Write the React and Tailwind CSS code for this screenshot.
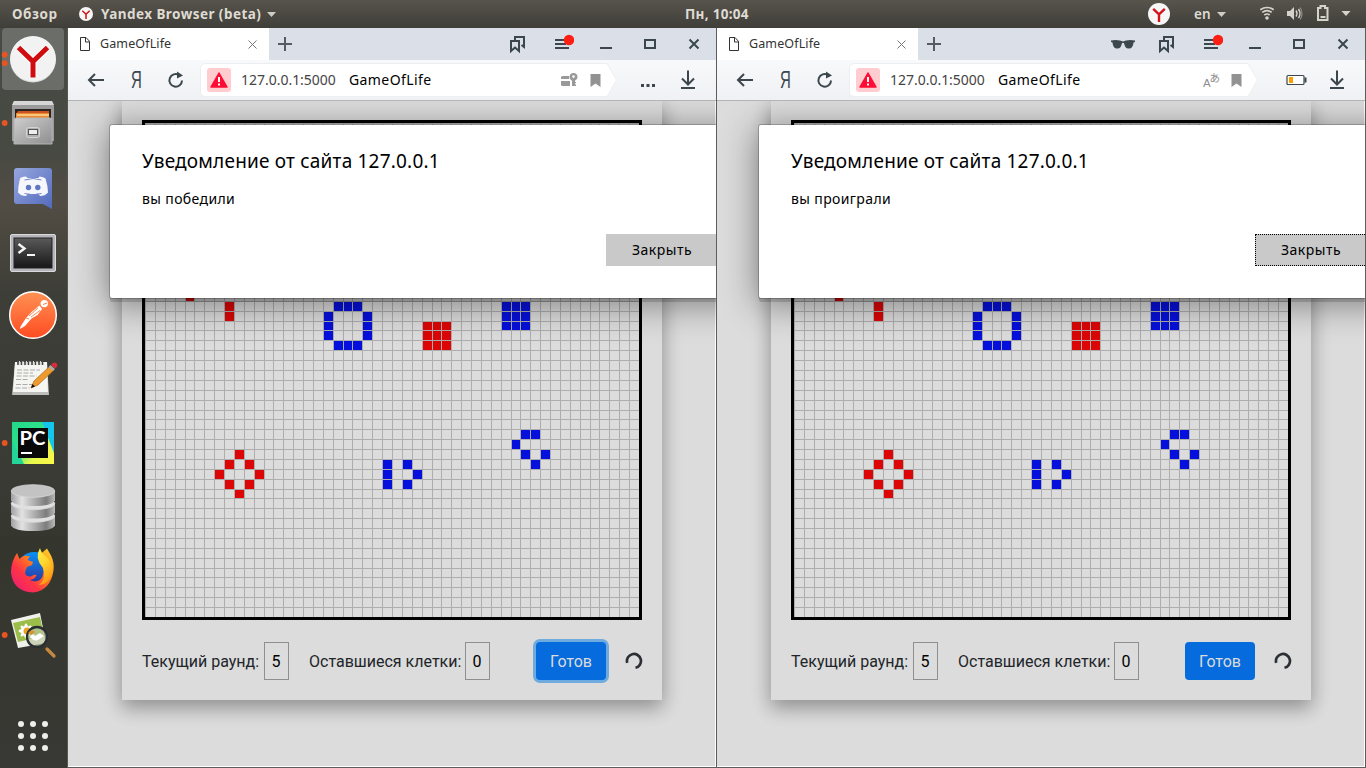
import React from 'react';

const SIZE = 494;
const COUNT = 50;
const at = (k) => Math.round((SIZE / COUNT) * k);

const RED = [
  [4, 17], [8, 18], [8, 19],
  [28, 20], [29, 20], [30, 20], [28, 21], [29, 21], [30, 21], [28, 22], [29, 22], [30, 22],
  [9, 33], [8, 34], [10, 34], [7, 35], [11, 35], [8, 36], [10, 36], [9, 37],
];
const BLUE = [
  [19, 18], [20, 18], [21, 18], [18, 19], [22, 19], [18, 20], [22, 20], [18, 21], [22, 21], [19, 22], [20, 22], [21, 22],
  [36, 18], [37, 18], [38, 18], [36, 19], [37, 19], [38, 19], [36, 20], [37, 20], [38, 20],
  [38, 31], [39, 31], [37, 32], [38, 33], [40, 33], [39, 34],
  [24, 34], [24, 35], [24, 36], [26, 34], [26, 36], [27, 35],
];

function Cells({ cells, fill }) {
  return cells.map(([c, r]) => (
    <rect key={c + '-' + r} x={at(c) + 1} y={at(r) + 1} width={at(c + 1) - at(c) - 1} height={at(r + 1) - at(r) - 1} fill={fill} />
  ));
}

function Board() {
  const lines = Array.from({ length: COUNT }, (_, k) => at(k));
  return (
    <div className="h-[500px] w-[500px] border-3 border-black">
      <svg width="494" height="494" shapeRendering="crispEdges" className="block">
        {lines.map((p) => (
          <g key={p} fill="#adadad">
            <rect x={p} y="0" width="1" height="494" />
            <rect x="0" y={p} width="494" height="1" />
          </g>
        ))}
        <Cells cells={RED} fill="#dc0606" />
        <Cells cells={BLUE} fill="#0610dc" />
      </svg>
    </div>
  );
}

function Caret({ className }) {
  return (
    <svg width="9" height="5" viewBox="0 0 9 5" className={className}>
      <path d="M0 0h9L4.500 5z" fill="#cfcdc8" />
    </svg>
  );
}

function YBadge({ size }) {
  return (
    <svg width={size} height={size} viewBox="0 0 22 22" className="shrink-0">
      <circle cx="11" cy="11" r="11" fill="#f6f6f6" />
      <path d="M5.200 5.800l5.800 5.500 5.800-5.500M11 11v8" fill="none" stroke="#d4121a" strokeWidth="2.400" />
    </svg>
  );
}

function TopBar() {
  return (
    <header className="flex h-7 shrink-0 items-center bg-gradient-to-b from-[#57544c] to-[#403e39] text-[13px] font-bold text-[#dfdbd2]">
      <div className="flex w-[480px] items-center pl-3">
        <span className="w-[67px] text-[13.500px] tracking-[0.55px]">Обзор</span>
        <YBadge size={14} />
        <span className="ml-2 w-[162px] text-[13.500px] whitespace-nowrap tracking-[0.45px]">Yandex Browser (beta)</span>
        <Caret className="ml-1" />
      </div>
      <div className="flex-1 pl-[205px] text-[13.500px] whitespace-nowrap tracking-[0.3px]">Пн, 10:04</div>
      <div className="flex w-[218px] items-center">
        <YBadge size={22} />
        <span className="ml-6 w-[18px] text-[13.500px] font-semibold">en</span>
        <Caret className="ml-[5px]" />
        <svg width="108" height="20" viewBox="1250 4 108 20" className="ml-[24px]" fill="none" stroke="#d6d3cc">
          <path d="M1260.300 9.800q6.700-4.600 13.400 0M1262.300 12.400q4.700-3.400 9.400 0M1264.300 15q2.700-2 5.400 0" strokeWidth="1.700" />
          <circle cx="1267" cy="18" r="1.800" fill="#d6d3cc" stroke="none" />
          <path d="M1287 11h3l4-4v13l-4-4h-3z" fill="#d6d3cc" stroke="none" />
          <path d="M1296 10.500q2 3 0 6M1298.500 9q3 4.500 0 9" strokeWidth="1.400" />
          <path d="M1300.300 7.500q3.200 6 0 12" strokeWidth="1.200" stroke="#8b8881" />
          <path d="M1318 8h2.500v-2h4.500v2h2.500v12h-9.500z" strokeWidth="2" />
          <path d="M1320.500 17h5" strokeWidth="2" />
          <path d="M1341.500 11h9l-4.500 5z" fill="#d6d3cc" stroke="none" />
        </svg>
      </div>
    </header>
  );
}

function DockItem({ top, running, children }) {
  return (
    <svg width="68" height="64" viewBox={'0 ' + top + ' 68 64'} className="block shrink-0">
      {running && <circle cx="4.700" cy={top + 32} r="2.900" fill="#e95420" />}
      {children}
    </svg>
  );
}

function Dock() {
  return (
    <aside className="flex w-[68px] shrink-0 flex-col border-r border-[#565650] bg-[linear-gradient(#484a44_0%,#474943_16%,#524d44_24%,#4a473e_28%,#3d3e38_36%,#3a3b35_60%,#34362e_70%,#36372f_78%,#383834_100%)]">
      <svg width="0" height="0" className="absolute">
        <defs>
          <linearGradient id="metal" x1="0" x2="1">
            <stop offset="0" stopColor="#a0a0a0" /><stop offset=".25" stopColor="#e2e2e2" /><stop offset=".5" stopColor="#b4b4b4" /><stop offset=".8" stopColor="#7c7c7c" /><stop offset="1" stopColor="#b9b9b9" />
          </linearGradient>
          <linearGradient id="drawer" x1="0" x2="1" y2="1">
            <stop offset="0" stopColor="#cecece" /><stop offset="1" stopColor="#8e8e8e" />
          </linearGradient>
          <linearGradient id="orange" x2="0" y2="1">
            <stop offset="0" stopColor="#ff9254" /><stop offset="1" stopColor="#ff4b21" />
          </linearGradient>
          <linearGradient id="term" x2="0" y2="1">
            <stop offset="0" stopColor="#5a5a5a" /><stop offset=".5" stopColor="#383838" /><stop offset="1" stopColor="#171717" />
          </linearGradient>
          <linearGradient id="discord" x2="1" y2="1">
            <stop offset="0" stopColor="#96a6de" /><stop offset="1" stopColor="#526abc" />
          </linearGradient>
          <linearGradient id="pych" x1="0" y1="0" x2="1" y2="1">
            <stop offset="0" stopColor="#21d789" /><stop offset=".4" stopColor="#2ee28c" /><stop offset=".7" stopColor="#e8f84b" /><stop offset="1" stopColor="#fcf84a" />
          </linearGradient>
          <linearGradient id="fox" x1="0" y1="1" x2="1" y2="0">
            <stop offset="0" stopColor="#e8177e" /><stop offset=".35" stopColor="#ff3546" /><stop offset=".65" stopColor="#ff8b16" /><stop offset="1" stopColor="#ffdc32" />
          </linearGradient>
          <linearGradient id="flame" x1="0" y1="0" x2=".4" y2="1">
            <stop offset="0" stopColor="#fff045" /><stop offset=".5" stopColor="#ffd52e" /><stop offset="1" stopColor="#ff9a14" />
          </linearGradient>
          <linearGradient id="globe" x2="0" y2="1">
            <stop offset="0" stopColor="#0a91f5" /><stop offset="1" stopColor="#302b96" />
          </linearGradient>
        </defs>
      </svg>
      <svg width="68" height="63" viewBox="0 28 68 63" className="block shrink-0">
        <rect x="2" y="28" width="62" height="62" rx="4" fill="#6b6d68" />
        <circle cx="4.700" cy="54.700" r="2.900" fill="#e95420" /><circle cx="4.700" cy="63.200" r="2.900" fill="#e95420" />
        <circle cx="33" cy="59.500" r="23" fill="#d5d5d5" /><circle cx="33" cy="58.800" r="22.800" fill="#f2f2f2" />
        <path d="M18.500 47.500L33 61.500l14.500-14M33 60v17.500" fill="none" stroke="#fff" strokeWidth="7" />
        <path d="M18.500 47.500L33 61.500l14.500-14M33 60v17.500" fill="none" stroke="#cf0d10" strokeWidth="5" />
      </svg>
      <DockItem top={91} running>
        <path d="M14 101h38l2 5v35H12v-35z" fill="#9b9b9b" />
        <path d="M14 101h38l2 4H12z" fill="#d6d6d6" />
        <path d="M15 109h36v11H15z" fill="#2a2421" />
        <path d="M18 111h31v8H16v-5z" fill="#c85320" /><path d="M16 113h33v5H16z" fill="#e98a32" /><path d="M17 115h32" stroke="#ffd993" strokeWidth="1.500" />
        <path d="M14 119l2-1h34l2 1v25H14z" fill="url(#drawer)" stroke="#b4b4b4" />
        <rect x="26.500" y="127.500" width="13" height="10" rx="2" fill="#b0b0b0" stroke="#d4d4d4" />
        <rect x="28.500" y="129.500" width="9" height="5" fill="#eee" stroke="#555" />
      </DockItem>
      <DockItem top={155}>
        <path d="M17 168h32q3 0 3 3v38l-9-5H17q-3 0-3-3v-30q0-3 3-3z" fill="url(#discord)" />
        <path d="M26 176.500q-5 .5-6 2-2 8-2 14 3 3.500 8 3.500l2-2.500q5 1 10 0l2 2.500q5 0 8-3.500 0-6-2.500-14-2-1.700-6-2l-1 1.500h-11z" fill="#f6f7fc" />
        <circle cx="28.500" cy="187.500" r="2.700" fill="#6078c4" /><circle cx="37.800" cy="187.500" r="2.700" fill="#6078c4" />
        <path d="M24.500 180q8.500-3 17 0M24.500 193.500q8.500 3 17 0" fill="none" stroke="#7286cd" strokeWidth="1" />
      </DockItem>
      <DockItem top={219}>
        <rect x="10.500" y="234.500" width="45" height="37" rx="1.500" fill="#b6b6ba" stroke="#d9d9dd" />
        <rect x="14" y="238" width="38" height="30" fill="url(#term)" stroke="#222" />
        <path d="M18.500 244l6 4.500-6 4.500" fill="none" stroke="#f5f5f5" strokeWidth="2.400" /><path d="M27 255h8" stroke="#f5f5f5" strokeWidth="2" />
      </DockItem>
      <DockItem top={283}>
        <circle cx="33" cy="315" r="23.300" fill="url(#orange)" stroke="#fff" strokeWidth="1.500" />
        <circle cx="44.300" cy="303.600" r="3.700" fill="#fff" /><path d="M43 304.500l4-1.500" stroke="#ff7a42" strokeWidth="1" />
        <path d="M39.500 305.500l2.500 3.500-4.500 6-6 3.500-6.500 7.500-5 3 .5-2.500 5.500-8.500 5.500-6z" fill="#fff" />
        <path d="M38 308l-9 8M40 310.500l-9 6.500M26 318l3 1" stroke="#ff7a42" strokeWidth=".9" />
      </DockItem>
      <DockItem top={347}>
        <path d="M15 363h32l2 32H12z" fill="#bdbdb9" /><path d="M15 362h32l1 30H13z" fill="#f5f5f1" />
        <path d="M18 360v5M21.500 360v5M25 360v5M28.500 360v5M32 360v5M35.500 360v5M39 360v5M42.500 360v5" stroke="#444" strokeWidth="1.600" /><path d="M19.500 361v4M23 361v4M26.500 361v4M30 361v4M33.500 361v4M37 361v4M40.500 361v4" stroke="#ddd" />
        <path d="M17 370h23M17 373h16M16.500 376h20M16 379.500h12M16 384.500h16M15.500 388h14" stroke="#aaa" strokeDasharray="5 1.500" />
        <path d="M31 388l3-7 16-15 4 4-16 15z" fill="#ed9b2d" stroke="#a96517" strokeWidth=".7" />
        <path d="M31 388l1.500-4 2.500 2.500z" fill="#111" /><path d="M48.500 367l4.500 4 2-2-4.500-4z" fill="#aaa" /><path d="M51 364.500l4 4q3-2 2-4.500t-4-1z" fill="#df2a3a" />
      </DockItem>
      <DockItem top={411} running>
        <rect x="12" y="422" width="42" height="42" fill="url(#pych)" />
        <path d="M42 422h12v31z" fill="#14c5ec" /><path d="M12 440v24h12z" fill="#23d598" />
        <rect x="18" y="428" width="30" height="30" fill="#090909" />
        <text x="19.400" y="444.800" fontFamily="Lato" fontWeight="700" fontSize="18.500" fill="#fff" textLength="26" lengthAdjust="spacingAndGlyphs">PC</text>
        <path d="M21 453h11" stroke="#fff" strokeWidth="2" />
      </DockItem>
      <DockItem top={475}>
        {[516, 503.500, 491].map((y, i) => (
          <g key={y}>
            <path d={'M11 ' + y + 'v9.500q3 5.500 22 5.500t22-5.500v-9.500z'} fill="url(#metal)" />
            <ellipse cx="33" cy={y} rx="21.700" ry="6.300" fill={i === 2 ? '#c3c3c3' : '#e0e0e0'} stroke="#d8d8d8" strokeWidth=".8" />
          </g>
        ))}
      </DockItem>
      <DockItem top={539}>
        <circle cx="34" cy="569" r="17" fill="url(#globe)" />
        <path d="M17 553l2.500 6q2.500-3 6-3.500 2.500 1 4.500.5l-2.500 4 5.500 2-1 3-5 2q-2 3.500-2 6.500 1.500 3.500 6 3 3-2.500 5.500-1.500-1.500 4.500-7 5 9 4 13-3.500 2.500-7-1.500-14l-1-8 7-6 4 7q3.500 7 2.500 15-3 20-20.500 22-20-1-22-20 0-11 6-19.500z" fill="url(#fox)" />
        <path d="M40 548q1 5 6 8.500 8 7 6 17-3 11-13 11.500 8-6.500 4-17-9-10-3-20z" fill="url(#flame)" />
      </DockItem>
      <DockItem top={603} running>
        <path d="M11 620l29-7 6 30-28 5z" fill="#f1f1eb" /><path d="M13 623l27-6 4 19-26 6z" fill="#9bbd49" />
        <g fill="#fff"><ellipse cx="26" cy="631" rx="7.500" ry="2.400" /><ellipse cx="26" cy="631" rx="2.400" ry="7.500" /><ellipse cx="26" cy="631" rx="7.500" ry="2.200" transform="rotate(45 26 631)" /><ellipse cx="26" cy="631" rx="7.500" ry="2.200" transform="rotate(-45 26 631)" /></g>
        <circle cx="27" cy="631" r="3.500" fill="#eaa225" />
        <path d="M47 649l7 7" stroke="#c48941" strokeWidth="3.200" strokeLinecap="round" />
        <circle cx="37" cy="637" r="10" fill="#bac5a1" fillOpacity=".7" stroke="#292f32" strokeWidth="2.300" />
        <path d="M30 637q3-5 5-1l5-3 4 3-6 4q-4 2-8-3z" fill="#fff" /><path d="M28 633q4-5 7-1l-4 3z" fill="#d8932b" />
      </DockItem>
      <svg width="68" height="50" viewBox="0 711 68 50" className="mt-auto mb-[7px] block">
        {[724, 736, 748].map((y) => [21, 33, 45].map((x) => <circle key={x + '-' + y} cx={x} cy={y} r="3" fill="#eeeeec" />))}
      </svg>
    </aside>
  );
}

function Slot({ w, children }) {
  return <div className={'flex h-full shrink-0 items-center justify-center ' + w}>{children}</div>;
}

function Glyph({ children, w = 24 }) {
  return (
    <svg width={w} height="24" viewBox={'0 0 ' + w + ' 24'} fill="none" stroke="#3b464d" strokeWidth="2">
      {children}
    </svg>
  );
}

function TabStrip({ incognito }) {
  return (
    <div className="flex h-8 shrink-0 bg-[#dbe0e8]">
      <div className="flex w-[201px] items-center bg-white pr-3 pl-3">
        <svg width="10" height="14" viewBox="0 0 10 14" fill="none" stroke="#333"><path d="M.5.500h5.500l3.500 3.800v9.200h-9zM5.500.500v4.500h4" /></svg>
        <span className="ml-2.5 text-[12.500px] tracking-[0.12px] text-[#333]">GameOfLife</span>
        <svg width="9" height="9" viewBox="0 0 9 9" className="ml-auto" stroke="#777"><path d="M.5.500l8 8M8.500.500l-8 8" /></svg>
      </div>
      <Slot w="w-8"><svg width="14" height="14" viewBox="0 0 14 14" stroke="#555b60" strokeWidth="2"><path d="M7 0v14M0 7h14" /></svg></Slot>
      <div className="ml-auto flex">
        {incognito && (
          <Slot w="w-11">
            <Glyph><path d="M0 8.500q5-1 9 0l3 1 3-1q4-1 9 0v1.500l-1.500.5q-.5 6-4.500 6-4 .5-5-5.500h-2q-1 6-5 5.500-4 0-4.500-6L0 10z" fill="#3b464d" stroke="none" /></Glyph>
          </Slot>
        )}
        <Slot w="w-11">
          <Glyph><path d="M5 9h8v10l-4-3.500L5 19zM9 8.500V5h9v10l-2.500-2" /></Glyph>
        </Slot>
        <Slot w="w-11">
          <Glyph><path d="M5 8h9M5 12h11M5 16h14" /><circle cx="19" cy="8" r="5.200" fill="#fe1f14" stroke="none" /></Glyph>
        </Slot>
        <Slot w="w-11"><Glyph><path d="M6 16h12" /></Glyph></Slot>
        <Slot w="w-11"><Glyph><path d="M7 8h10v8H7z" /></Glyph></Slot>
        <Slot w="w-11"><Glyph><path d="M7.500 7.500l9 9M16.500 7.500l-9 9" /></Glyph></Slot>
      </div>
    </div>
  );
}

function Toolbar({ incognito }) {
  const bw = incognito ? 409 : 417;
  return (
    <div className="flex h-[41px] shrink-0 border-b border-[#b3b4b6] bg-gradient-to-b from-[#f8f9fb] to-[#eff1f4] pl-2">
      <Slot w="w-10"><Glyph><path d="M20 12H5M11 6l-6 6 6 6" /></Glyph></Slot>
      <Slot w="w-10"><span className="pb-px font-['Liberation_Sans'] text-[23px] leading-6 text-[#3b464d] scale-x-65">Я</span></Slot>
      <Slot w="w-10"><Glyph><path d="M18 12.500a6.300 6.300 0 1 1-3-5.500" /><path d="M13 3.500l6 4-6 3z" fill="#3b464d" stroke="none" /></Glyph></Slot>
      <div className="relative ml-1 flex h-10 items-center">
        <svg width={bw} height="40" viewBox={'0 0 ' + bw + ' 40'} className="block">
          <path d={'M6 3.500H' + (bw - 10) + 'l9.500 16.500-9.500 16.500H6q-5.500 0-5.500-5.500V9Q.5 3.500 6 3.500z'} fill="#fff" stroke="#edeef0" />
        </svg>
        <div className="absolute inset-0 flex items-center pr-[16px] pl-[7px]">
          <div className="flex size-6 items-center justify-center rounded-[3px] bg-[#ffcdd0]">
            <svg width="18" height="16" viewBox="0 0 18 16"><path d="M9 1L17 15H1z" fill="#ff0c35" stroke="#ff0c35" strokeWidth="1.500" strokeLinejoin="round" /><path d="M9 5v5M9 11.500v2" stroke="#fff" strokeWidth="2" /></svg>
          </div>
          <span className="ml-[10px] w-[107px] pb-0.5 text-[14px] tracking-[-0.02px] whitespace-nowrap text-[#444]">127.0.0.1:5000</span>
          <span className="pb-0.5 pl-px text-[14px] tracking-[0.4px] text-black">GameOfLife</span>
          <div className="ml-auto flex items-center">
            {incognito ? (
              <svg width="18" height="22" viewBox="0 -3 18 22" fill="#8e8e8e" className="mr-[10px] overflow-visible">
                <text x="0" y="14.500" fontSize="11.500" fontFamily="Liberation Sans">A</text>
                <text x="6.500" y="9.500" fontSize="10.500" fontFamily="Noto Sans CJK JP">あ</text>
              </svg>
            ) : (
              <svg width="17" height="16" viewBox="0 0 17 16" fill="#999" className="mr-[12px]">
                <path d="M1.500 4H8v3H0V5.500Q0 4 1.500 4zM0 9h9v5H1.500Q0 14 0 12.500z" />
                <path fillRule="evenodd" d="M12.500 1a4 4 0 0 1 1.500 7.700V14h-3V8.700A4 4 0 0 1 12.500 1zm0 2.300a1.300 1.300 0 1 0 0 2.600 1.300 1.300 0 0 0 0-2.600z" /><path d="M13 10h2v1.300h-2zM13 12.500h2V14h-2z" />
              </svg>
            )}
            <svg width="11" height="13" viewBox="0 0 11 13"><path d="M.500 0h10v13l-5-3.500-5 3.500z" fill="#929292" /></svg>
          </div>
        </div>
      </div>
      <div className="ml-auto flex pr-2">
        <Slot w="w-10">
          {incognito ? (
            <Glyph><path d="M3 7.500h15q1 0 1 1v7q0 1-1 1H3q-1 0-1-1v-7q0-1 1-1z" strokeWidth="1.200" fill="#fff" /><path d="M20.500 9.500v5" strokeWidth="2" /><path d="M4 9h4v6H4z" fill="#ff9d00" stroke="none" /></Glyph>
          ) : (
            <Glyph><path d="M5 16h3v3H5zM10.500 16h3v3h-3zM16 16h3v3h-3z" fill="#3b464d" stroke="none" /></Glyph>
          )}
        </Slot>
        <Slot w="w-10"><Glyph><path d="M12 2.500V16M6 10.500l6 6 6-6M5 20h14" /></Glyph></Slot>
      </div>
    </div>
  );
}

function NumberBox({ value }) {
  return <div className="ml-[5px] flex h-[38px] w-[25px] shrink-0 items-center justify-center border border-[#8f8f8f] pt-px pr-px text-black">{value}</div>;
}

function Dialog({ message, focused }) {
  return (
    <div className="absolute top-6 left-[42px] h-[173px] w-[640px] rounded-[2px] bg-white px-8 pt-[22px] text-black shadow-[0_0_0_1px_rgba(0,0,0,0.2),0_4px_0_0_rgba(0,0,0,0.15),0_5px_35px_2px_rgba(0,0,0,0.42)]">
      <h1 className="h-7 text-[19px] leading-7 tracking-[0.2px] whitespace-nowrap">Уведомление от сайта 127.0.0.1</h1>
      <p className="mt-3 h-6 text-[14px] leading-6 tracking-[0.38px] whitespace-nowrap">{message}</p>
      <div className={'mt-[23px] ml-[464px] flex h-8 w-[112px] items-center justify-center bg-[#c9c9c9] pb-0.5 text-[14px] tracking-[0.5px] ' + (focused ? 'border border-dotted border-black' : '')}>
        Закрыть
      </div>
    </div>
  );
}

function BrowserWindow({ message, incognito }) {
  return (
    <section className="flex w-[649px] shrink-0 flex-col border-r border-b border-[#5c5c5a]">
      <TabStrip incognito={incognito} />
      <Toolbar incognito={incognito} />
      <div className="relative flex-1 overflow-hidden">
        <div className="h-full overflow-hidden border-r border-b border-white bg-[#dcdcdc]">
          <main className="ml-[54px] h-[599px] w-[540px] bg-[#dcdcdc] px-5 pt-[19px] font-[Roboto] shadow-[0_8px_17px_0_rgba(0,0,0,0.2),0_6px_20px_0_rgba(0,0,0,0.19)]">
            <Board />
            <div className="mt-[22px] flex h-[38px] items-center text-[16px] whitespace-nowrap text-[#212529]">
              <span className="w-[117px] shrink-0 pt-px">Текущий раунд:</span>
              <NumberBox value="5" />
              <span className="ml-5 w-[151px] shrink-0 pt-px">Оставшиеся клетки:</span>
              <NumberBox value="0" />
              <button className={'ml-[46px] h-[38px] w-[70px] shrink-0 rounded-[4px] bg-[#066bdc] pt-px text-[#dcdcdc] ' + (incognito ? '' : 'ring-3 ring-[#70abdf]')}>Готов</button>
              <svg width="18" height="18" viewBox="0 0 18 18" className="ml-[19px] shrink-0">
                <path d="M2.200 10.800A7 7 0 1 1 10.500 15.800" fill="none" stroke="#2c3034" strokeWidth="2.700" />
              </svg>
            </div>
          </main>
        </div>
        <Dialog message={message} focused={incognito} />
      </div>
    </section>
  );
}

export default function App() {
  return (
    <div className="flex h-[768px] w-[1366px] flex-col overflow-hidden bg-[#3c3d37] font-['Noto_Sans',sans-serif]">
      <TopBar />
      <div className="flex min-h-0 flex-1">
        <Dock />
        <BrowserWindow message="вы победили" />
        <BrowserWindow message="вы проиграли" incognito />
      </div>
    </div>
  );
}
